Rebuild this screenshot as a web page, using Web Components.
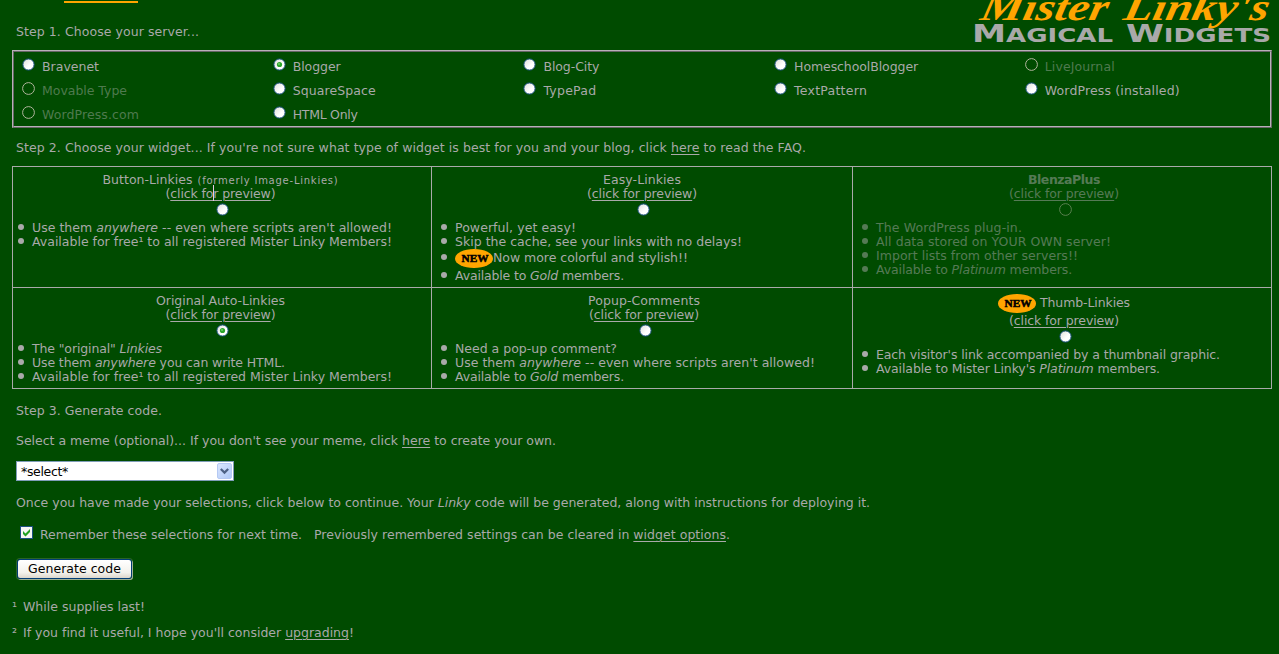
<!DOCTYPE html>
<html lang="en">
<head>
    <meta charset="utf-8">
    <title>Mister Linky's Magical Widgets</title>
    <style>
        body {
            margin: 0;
            background: #004b00;
            color: #a9a9a9;
            font: 12.5px/14px "DejaVu Sans", sans-serif;
            overflow: hidden;
        }
    </style>
</head>
<body>
    <linky-page></linky-page>

    <template id="js-linky-page">
        <style>
            :host {
                display: flex;
                flex-direction: column;
                height: 654px;
                padding: 0 7px 0 12px;
                box-sizing: border-box;
            }

            a {
                color: inherit;
                text-decoration: underline;
                text-decoration-thickness: 1px;
                text-underline-offset: 2px;
            }

            header {
                display: flex;
                justify-content: space-between;
                height: 50px;
            }

            .tab {
                width: 74px;
                height: 2px;
                margin: 1px 0 22px 52px;
                background: #ffa500;
            }

            .line {
                height: 14px;
                padding-left: 4px;
                white-space: nowrap;
            }

            .servers {
                display: grid;
                grid-template-columns: repeat(5, 250.7px);
                grid-auto-rows: 24px;
                height: 76px;
                padding: 1px 0 0 7px;
                box-sizing: border-box;
                border: 1px solid;
                border-color: #666 #b8b0b8 #b8b0b8 #666;
            }

            .frame {
                border: 1px solid;
                border-color: #b8b0b8 #666 #666 #b8b0b8;
                height: 76px;
            }

            .widgets {
                display: grid;
                grid-template-columns: 419px 421px 420px;
                grid-template-rows: 121px 102px;
                margin-top: 11px;
            }

            .remember {
                display: flex;
                padding-left: 8px;
                margin-top: 16px;
            }

            .remember fit-text {
                margin: 2px 0 0 7px;
            }

            .remember fit-text + fit-text {
                margin-left: 12px;
            }
        </style>

        <header>
            <div>
                <div class="tab"></div>
                <div class="line"><fit-text width="183">Step 1. Choose your server...</fit-text></div>
            </div>
            <site-logo></site-logo>
        </header>

        <div class="frame">
            <div class="servers">
                <server-option><fit-text width="57">Bravenet</fit-text></server-option>
                <server-option checked><fit-text width="48">Blogger</fit-text></server-option>
                <server-option><fit-text width="56">Blog-City</fit-text></server-option>
                <server-option><fit-text width="124">HomeschoolBlogger</fit-text></server-option>
                <server-option disabled><fit-text width="70">LiveJournal</fit-text></server-option>
                <server-option disabled><fit-text width="85">Movable Type</fit-text></server-option>
                <server-option><fit-text width="83">SquareSpace</fit-text></server-option>
                <server-option><fit-text width="53">TypePad</fit-text></server-option>
                <server-option><fit-text width="73">TextPattern</fit-text></server-option>
                <server-option><fit-text width="135">WordPress (installed)</fit-text></server-option>
                <server-option disabled><fit-text width="97">WordPress.com</fit-text></server-option>
                <server-option><fit-text width="65">HTML Only</fit-text></server-option>
            </div>
        </div>

        <div class="line" style="margin-top: 13px"><fit-text width="790">Step 2. Choose your widget... If you're not sure what type of widget is best for you and your blog, click <a>here</a> to read the FAQ.</fit-text></div>

        <div class="widgets">
            <widget-card style="--indent: 19px; --shift: -1.5px; --radio-shift: 3px">
                <span slot="title"><fit-text width="90">Button-Linkies</fit-text> <fit-text width="141" style="font-size: 10px; margin-left: 1px">(formerly Image-Linkies)</fit-text></span>
                <list-item><fit-text width="360">Use them <i>anywhere</i> -- even where scripts aren't allowed!</fit-text></list-item>
                <list-item><fit-text width="360">Available for free¹ to all registered Mister Linky Members!</fit-text></list-item>
                <text-cursor></text-cursor>
            </widget-card>
            <widget-card style="--shift: 0px; --radio-shift: 2px">
                <fit-text slot="title" width="78">Easy-Linkies</fit-text>
                <list-item><fit-text width="121">Powerful, yet easy!</fit-text></list-item>
                <list-item><fit-text width="287">Skip the cache, see your links with no delays!</fit-text></list-item>
                <list-item tall><new-badge></new-badge><fit-text width="195">Now more colorful and stylish!!</fit-text></list-item>
                <list-item><fit-text width="169">Available to <i>Gold</i> members.</fit-text></list-item>
            </widget-card>
            <widget-card last disabled style="--shift: 2px; --radio-shift: 2px">
                <fit-text slot="title" width="72" style="font-weight: bold">BlenzaPlus</fit-text>
                <list-item><fit-text width="146">The WordPress plug-in.</fit-text></list-item>
                <list-item><fit-text width="235">All data stored on YOUR OWN server!</fit-text></list-item>
                <list-item><fit-text width="202">Import lists from other servers!!</fit-text></list-item>
                <list-item><fit-text width="196">Available to <i>Platinum</i> members.</fit-text></list-item>
            </widget-card>
            <widget-card bottom checked style="--indent: 19px; --shift: -1.5px; --radio-shift: 3px">
                <fit-text slot="title" width="129">Original Auto-Linkies</fit-text>
                <list-item><fit-text width="130">The "original" <i>Linkies</i></fit-text></list-item>
                <list-item><fit-text width="253">Use them <i>anywhere</i> you can write HTML.</fit-text></list-item>
                <list-item><fit-text width="360">Available for free¹ to all registered Mister Linky Members!</fit-text></list-item>
            </widget-card>
            <widget-card bottom style="--shift: 2px; --radio-shift: 3px">
                <fit-text slot="title" width="112">Popup-Comments</fit-text>
                <list-item><fit-text width="162">Need a pop-up comment?</fit-text></list-item>
                <list-item><fit-text width="360">Use them <i>anywhere</i> -- even where scripts aren't allowed!</fit-text></list-item>
                <list-item><fit-text width="169">Available to <i>Gold</i> members.</fit-text></list-item>
            </widget-card>
            <widget-card bottom last tall style="--shift: 2px; --radio-shift: 2px">
                <new-badge slot="title"></new-badge>
                <fit-text slot="title" width="90" style="margin-left: 4px">Thumb-Linkies</fit-text>
                <list-item><fit-text width="344">Each visitor's link accompanied by a thumbnail graphic.</fit-text></list-item>
                <list-item><fit-text width="284">Available to Mister Linky's <i>Platinum</i> members.</fit-text></list-item>
            </widget-card>
        </div>

        <div class="line" style="margin-top: 15px"><fit-text width="146">Step 3. Generate code.</fit-text></div>
        <div class="line" style="margin-top: 16px"><fit-text width="540">Select a meme (optional)... If you don't see your meme, click <a>here</a> to create your own.</fit-text></div>
        <meme-select><fit-text width="47">*select*</fit-text></meme-select>
        <div class="line" style="margin-top: 15px"><fit-text width="854">Once you have made your selections, click below to continue. Your <i>Linky</i> code will be generated, along with instructions for deploying it.</fit-text></div>
        <div class="remember">
            <check-box></check-box>
            <fit-text width="262">Remember these selections for next time.</fit-text>
            <fit-text width="416">Previously remembered settings can be cleared in <a>widget options</a>.</fit-text>
        </div>
        <push-button><fit-text width="93">Generate code</fit-text></push-button>
        <foot-note mark="¹"><fit-text width="122">While supplies last!</fit-text></foot-note>
        <foot-note mark="²"><fit-text width="331">If you find it useful, I hope you'll consider <a>upgrading</a>!</fit-text></foot-note>
    </template>

    <script>
        class BaseElement extends HTMLElement {
            connectedCallback() {
                if (!this.shadowRoot) {
                    this.attachShadow({ mode: 'open' }).innerHTML = this.render();
                }
            }
        }

        // Spreads its text over the given width with letter-spacing
        class FitText extends BaseElement {
            connectedCallback() {
                super.connectedCallback();
                requestAnimationFrame(() => this.fit());
                this.fit();
            }

            fit() {
                const width = Number(this.getAttribute('width'));
                this.style.letterSpacing = '0px';
                const natural = this.getBoundingClientRect().width;
                if (natural) {
                    this.style.letterSpacing = (width - natural) / this.textContent.length + 'px';
                }
            }

            render() {
                return `
                    <style>
                        :host { display: inline-block; white-space: nowrap; }
                    </style>
                    <slot></slot>`;
            }
        }

        class XpRadio extends BaseElement {
            render() {
                const disabled = this.hasAttribute('disabled');
                const face = disabled
                    ? '<circle cx="6.5" cy="6.5" r="5.9" fill="none" stroke="#b0b49c"/>'
                    : '<circle cx="6.5" cy="6.5" r="5.6" fill="url(#face)" stroke="#1c5180"/>';
                const dot = this.hasAttribute('checked')
                    ? '<circle cx="6.5" cy="6.5" r="2.6" fill="#2aa52a"/><circle cx="6" cy="6" r="1" fill="#6fd06c"/>'
                    : '';
                return `
                    <style>
                        :host { display: block; width: 13px; height: 13px; }
                        svg { display: block; }
                    </style>
                    <svg width="13" height="13">
                        <defs>
                            <linearGradient id="face" x1="0" y1="0" x2="1" y2="1">
                                <stop offset="0" stop-color="#dcdcd7"/>
                                <stop offset=".6" stop-color="#fff"/>
                            </linearGradient>
                        </defs>
                        ${face}${dot}
                    </svg>`;
            }
        }

        class ServerOption extends BaseElement {
            render() {
                const state = ['checked', 'disabled'].filter(name => this.hasAttribute(name)).join(' ');
                return `
                    <style>
                        :host { display: flex; height: 24px; }
                        :host([disabled]) { color: #4f7a4f; }
                        xp-radio { margin: 5px 7px 0 1px; }
                        .label { padding-top: 7px; }
                    </style>
                    <xp-radio ${state}></xp-radio>
                    <div class="label"><slot></slot></div>`;
            }
        }

        class NewBadge extends BaseElement {
            render() {
                return `
                    <style>
                        :host { display: block; width: 38px; height: 19px; }
                        svg { display: block; }
                    </style>
                    <svg width="38" height="19">
                        <ellipse cx="19" cy="9.5" rx="19" ry="9.5" fill="#ffa500"/>
                        <text x="6.5" y="13.3" textLength="27" lengthAdjust="spacingAndGlyphs" fill="#000" stroke="#000" stroke-width=".5"
                            font-family="Liberation Serif, serif" font-size="11" font-weight="bold">NEW</text>
                    </svg>`;
            }
        }

        class ListItem extends BaseElement {
            render() {
                return `
                    <style>
                        :host { display: flex; height: 14px; }
                        :host([tall]) { height: 20px; }
                        .bullet {
                            width: 6px;
                            height: 6px;
                            margin: 3px 8px 0 -14px;
                            border-radius: 50%;
                            background: currentColor;
                        }
                        :host([tall]) .bullet { margin-top: 5px; }
                        :host([tall]) ::slotted(fit-text) { margin-top: 2px; }
                    </style>
                    <div class="bullet"></div>
                    <slot></slot>`;
            }
        }

        class WidgetCard extends BaseElement {
            render() {
                const state = ['checked', 'disabled'].filter(name => this.hasAttribute(name)).join(' ');
                return `
                    <style>
                        :host {
                            display: block;
                            position: relative;
                            box-sizing: border-box;
                            border: solid #a9a9a9;
                            border-width: 1px 0 0 1px;
                            padding-top: 6px;
                        }
                        :host([last]) { border-right-width: 1px; }
                        :host([bottom]) { border-bottom-width: 1px; }
                        .head {
                            display: flex;
                            flex-direction: column;
                            align-items: center;
                            padding-left: calc(10px + var(--shift));
                            padding-right: calc(10px - var(--shift));
                        }
                        .title { display: flex; height: 14px; white-space: nowrap; }
                        :host([tall]) .title { height: 20px; }
                        :host([tall]) ::slotted(fit-text) { margin-top: 2px; }
                        a { text-decoration: underline; text-underline-offset: 2px; text-decoration-thickness: 1px; }
                        xp-radio { margin: 2px 0 5px var(--radio-shift); }
                        .list { padding-left: var(--indent, 23px); }
                        :host([disabled]) .head, :host([disabled]) .list { opacity: .5; }
                    </style>
                    <div class="head">
                        <div class="title"><slot name="title"></slot></div>
                        <fit-text width="110">(<a>click for preview</a>)</fit-text>
                        <xp-radio ${state}></xp-radio>
                    </div>
                    <div class="list"><slot></slot></div>`;
            }
        }

        // Caret left standing over the preview link
        class TextCursor extends BaseElement {
            render() {
                return `
                    <style>
                        :host { position: absolute; left: 200px; top: 18px; width: 1px; height: 16px; background: #e6c8e6; }
                    </style>`;
            }
        }

        class MemeSelect extends BaseElement {
            render() {
                return `
                    <style>
                        :host {
                            display: flex;
                            justify-content: space-between;
                            box-sizing: border-box;
                            width: 218px;
                            height: 20px;
                            margin: 13px 0 0 4px;
                            padding: 1px 1px 1px 4px;
                            border: 1px solid #7f9db9;
                            background: #fff;
                            color: #000;
                        }
                        .value { padding-top: 2px; }
                        svg { display: block; }
                    </style>
                    <div class="value"><slot></slot></div>
                    <svg width="15" height="16">
                        <defs>
                            <linearGradient id="arrow" x1="0" y1="0" x2="1" y2="1">
                                <stop offset="0" stop-color="#dbe6fe"/>
                                <stop offset="1" stop-color="#aec8f7"/>
                            </linearGradient>
                        </defs>
                        <rect x=".5" y=".5" width="14" height="15" rx="1.5" fill="url(#arrow)" stroke="#b5c9f3"/>
                        <path d="M3.8 6l3.7 3.6L11.2 6" fill="none" stroke="#4d6185" stroke-width="2.2"/>
                    </svg>`;
            }
        }

        class CheckBox extends BaseElement {
            render() {
                return `
                    <style>
                        :host { display: block; width: 13px; height: 13px; }
                        svg { display: block; }
                    </style>
                    <svg width="13" height="13">
                        <rect x=".5" y=".5" width="12" height="12" fill="#f6f6f4" stroke="#1c5180"/>
                        <path d="M3 5v3l2.5 2.5L10 6V3L5.5 7.5z" fill="#21a121"/>
                    </svg>`;
            }
        }

        class PushButton extends BaseElement {
            render() {
                return `
                    <style>
                        :host {
                            display: flex;
                            justify-content: center;
                            box-sizing: border-box;
                            width: 115px;
                            height: 20px;
                            margin: 17px 0 0 5px;
                            padding-top: 2px;
                            border: 1px solid #003c74;
                            border-radius: 3px;
                            background: linear-gradient(#fff, #f3f2ec 70%, #dcd6cb);
                            box-shadow: 0 0 0 1px rgba(140, 160, 130, .3), 1px 1px 0 #a4b59a;
                            color: #000;
                        }
                    </style>
                    <slot></slot>`;
            }
        }

        class FootNote extends BaseElement {
            render() {
                return `
                    <style>
                        :host { display: flex; height: 14px; margin-top: 21px; }
                        :host([mark="²"]) { margin-top: 12px; }
                        .mark { width: 11px; }
                    </style>
                    <div class="mark">${this.getAttribute('mark')}</div>
                    <slot></slot>`;
            }
        }

        class SiteLogo extends BaseElement {
            render() {
                return `
                    <style>
                        :host { display: block; width: 300px; height: 48px; }
                        svg { display: block; }
                        .caps { font: bold 19px "DejaVu Sans", sans-serif; fill: #a9a9a9; }
                        .big { font-size: 25px; }
                        .script { font: italic bold 38px "Liberation Serif", serif; fill: #ffa500; }
                    </style>
                    <svg width="300" height="48">
                        <text class="caps" x="0" y="42" textLength="141" lengthAdjust="spacingAndGlyphs"><tspan class="big">M</tspan>AGICAL</text>
                        <text class="caps" x="154" y="42" textLength="145" lengthAdjust="spacingAndGlyphs"><tspan class="big">W</tspan>IDGETS</text>
                        <g transform="translate(0 20) skewX(-12)">
                            <text class="script" x="7" y="0" textLength="127" lengthAdjust="spacingAndGlyphs">Mister</text>
                            <text class="script" x="150" y="0" textLength="145" lengthAdjust="spacingAndGlyphs">Linky's</text>
                        </g>
                    </svg>`;
            }
        }

        class LinkyPage extends HTMLElement {
            connectedCallback() {
                const template = document.querySelector('#js-linky-page');
                this.attachShadow({ mode: 'open' }).appendChild(template.content.cloneNode(true));
            }
        }

        window.customElements.define('xp-radio', XpRadio);
        window.customElements.define('new-badge', NewBadge);
        window.customElements.define('server-option', ServerOption);
        window.customElements.define('list-item', ListItem);
        window.customElements.define('widget-card', WidgetCard);
        window.customElements.define('text-cursor', TextCursor);
        window.customElements.define('meme-select', MemeSelect);
        window.customElements.define('check-box', CheckBox);
        window.customElements.define('push-button', PushButton);
        window.customElements.define('foot-note', FootNote);
        window.customElements.define('site-logo', SiteLogo);
        window.customElements.define('linky-page', LinkyPage);
        window.customElements.define('fit-text', FitText);
    </script>
</body>
</html>
